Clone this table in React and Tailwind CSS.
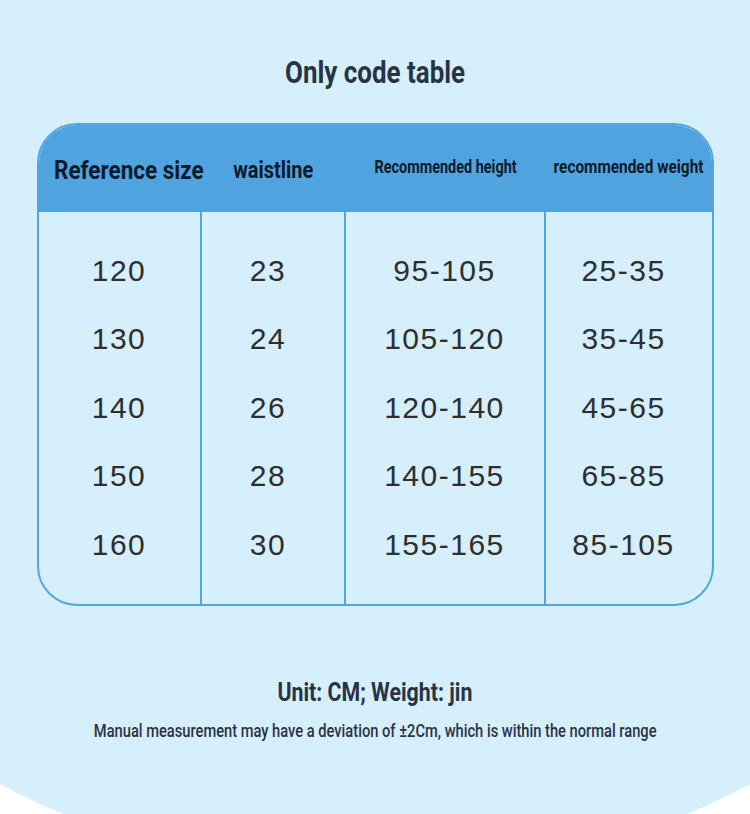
import React from "react";

const rows = [
  ["120", "23", "95-105", "25-35"],
  ["130", "24", "105-120", "35-45"],
  ["140", "26", "120-140", "45-65"],
  ["150", "28", "140-155", "65-85"],
  ["160", "30", "155-165", "85-105"],
];

const cols = ["w-[163px]", "w-[144px]", "w-[200px]", "w-[166px]"];
const nudge = ["", "pr-[9px]", "", "pr-[10px]"];

// condensed headline look: Roboto squeezed horizontally
function Cond({ children, className = "", scale = 0.8, origin = "center" }) {
  return (
    <span
      className={`inline-block whitespace-nowrap ${className}`}
      style={{
        fontFamily: "Roboto, sans-serif",
        transform: `scaleX(${scale})`,
        transformOrigin: origin,
      }}
    >
      {children}
    </span>
  );
}

export default function App() {
  return (
    <div className="relative w-[750px] h-[814px] overflow-hidden bg-white">
      {/* light-blue backdrop, curved off at the bottom */}
      <div className="absolute top-0 left-[-225px] w-[1200px] h-[873px] rounded-bl-[600px_405px] rounded-br-[600px_405px] bg-[#d6effd]" />

      <div className="relative flex flex-col items-center">
        <div className="mt-[52px] h-[40px] flex justify-center items-center">
          <Cond className="text-[32px] font-bold text-[#2a3344]" scale={0.81}>
            Only code table
          </Cond>
        </div>

        <div className="mt-[31px] w-[677px] h-[483px] rounded-[40px] border-2 border-[#56a4dc] overflow-hidden flex flex-col">
          <div className="h-[87px] bg-[#4fa3df] flex items-center text-[#0f1a2a]">
            <div className="w-[163px] shrink-0 min-w-0 pl-[15px] pt-[5px] flex">
              <Cond className="text-[25px] font-bold" scale={0.9} origin="left">Reference size</Cond>
            </div>
            <div className="w-[144px] shrink-0 min-w-0 pt-[3px] flex justify-center">
              <Cond className="text-[24px] font-bold" scale={0.83}>waistline</Cond>
            </div>
            <div className="w-[200px] shrink-0 min-w-0 pb-[3px] flex justify-center">
              <Cond className="text-[19px] font-bold" scale={0.76}>Recommended height</Cond>
            </div>
            <div className="w-[166px] shrink-0 min-w-0 pb-[3px] flex justify-center">
              <Cond className="text-[19px] font-bold" scale={0.81}>recommended weight</Cond>
            </div>
          </div>
          <div className="flex-1 flex">
            {cols.map((w, ci) => (
              <div
                key={ci}
                className={`${w} shrink-0 ${ci < 3 ? "border-r-2 border-[#56a4dc]" : ""} flex flex-col pt-[24px]`}
              >
                {rows.map((r) => (
                  <div
                    key={r[0]}
                    className={`h-[68.5px] ${nudge[ci]} flex items-center justify-center text-[30px] text-[#2e2e2e] tracking-[1.5px]`}
                    style={{ fontFamily: '"Liberation Sans", Arial, sans-serif' }}
                  >
                    {r[ci]}
                  </div>
                ))}
              </div>
            ))}
          </div>
        </div>

        <div className="mt-[69px] h-[34px] flex justify-center items-center">
          <Cond className="text-[26px] font-bold text-[#2a3344]" scale={0.82}>
            Unit: CM; Weight: jin
          </Cond>
        </div>
        <div className="mt-[9px] h-[24px] flex justify-center items-center">
          <Cond className="text-[18px] font-medium text-[#2a3344]" scale={0.815}>
            Manual measurement may have a deviation of ±2Cm, which is within the normal range
          </Cond>
        </div>
      </div>
    </div>
  );
}
